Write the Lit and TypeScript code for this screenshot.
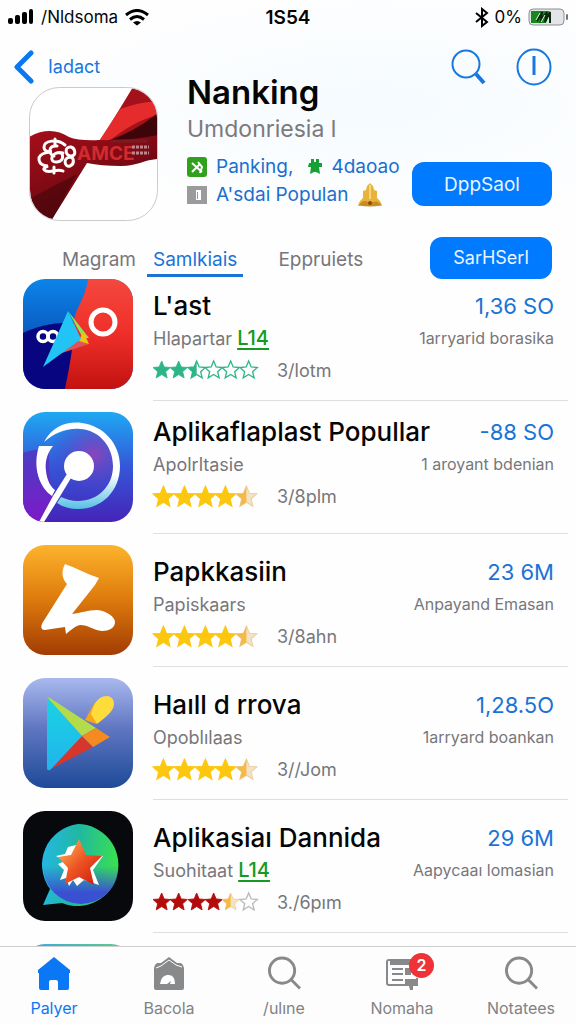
import { LitElement, html, svg, css } from "lit";
import { customElement, property } from "lit/decorators.js";
import { classMap } from "lit/directives/class-map.js";

type Star = "full" | "half" | "empty";

interface AppEntry {
  art: string;
  name: string;
  maker: string;
  tag?: string;
  tone: string;
  stars: Star[];
  votes: string;
  count: string;
  note: string;
  long?: boolean;
}

const GOLD: Star[] = ["full", "full", "full", "full", "half"];

const APPS: AppEntry[] = [
  { art: "duo", name: "L'ast", maker: "Hlapartar", tag: "L14", tone: "teal", stars: ["full", "full", "half", "empty", "empty", "empty"], votes: "3/lotm", count: "1,36 SO", note: "1arryarid borasika" },
  { art: "orbit", name: "Aplikaflaplast Popullar", maker: "Apolrltasie", tone: "gold", stars: GOLD, votes: "3/8plm", count: "-88 SO", note: "1 aroyant bdenian", long: true },
  { art: "zed", name: "Papkkasiin", maker: "Papiskaars", tone: "gold", stars: GOLD, votes: "3/8ahn", count: "23 6M", note: "Anpayand Emasan" },
  { art: "play", name: "Haıll d rrova", maker: "Opoblılaas", tone: "gold", stars: GOLD, votes: "3//Jom", count: "1,28.5O", note: "1arryard boankan" },
  { art: "bubble", name: "Aplikasiaı Dannida", maker: "Suohitaat", tag: "L14", tone: "red", stars: ["full", "full", "full", "full", "half", "empty"], votes: "3./6pım", count: "29 6M", note: "Aapycaaı lomasian" },
];

const art: Record<string, unknown> = {
  duo: svg`
    <defs>
      <linearGradient id="b" x2="0" y2="1"><stop stop-color="#0c84ea"/><stop offset=".45" stop-color="#0a5fc4"/></linearGradient>
      <linearGradient id="r" x2="0" y2="1"><stop stop-color="#f4483e"/><stop offset=".5" stop-color="#ee2f29"/><stop offset="1" stop-color="#c2120f"/></linearGradient>
    </defs>
    <path fill="url(#b)" d="M0 0h110v110H0z"/>
    <path fill="#07057f" d="M0 54C14 48 28 43 54 44l2 66H0z"/>
    <path fill="url(#r)" d="M65 0C62 22 50 32 51 45c0 20-5 45-9 65h68V0z"/>
    <g fill="none" stroke="#fff">
      <circle cx="20" cy="57.500" r="5" stroke-width="3.500"/>
      <circle cx="30" cy="57.500" r="5" stroke-width="3.500"/>
      <circle cx="80" cy="43" r="12" stroke-width="5"/>
    </g>
    <path fill="#d9575a" d="m66 65-30 10 20-15z"/>
    <path fill="#86e85a" d="m45 32 15 27h6z"/>
    <path fill="#f5c10c" d="m60 52 6 13-10-3z"/>
    <path fill="#21c4f5" d="M45 32 20 88l38-28z"/>`,
  orbit: svg`
    <defs>
      <linearGradient id="o" x2="0" y2="1"><stop stop-color="#1ea9f3"/><stop offset=".5" stop-color="#3556d8"/><stop offset="1" stop-color="#4524b8"/></linearGradient>
      <linearGradient id="p" x2="0" y2="1"><stop stop-color="#4a3fc4"/><stop offset="1" stop-color="#7c19c8"/></linearGradient>
      <linearGradient id="q" x2="0" y2="1"><stop offset=".6" stop-color="#fff"/><stop offset="1" stop-color="#56bfe4"/></linearGradient>
      <radialGradient id="k" cx=".7" cy=".35" r=".6"><stop stop-color="#8d44bb"/><stop offset="1" stop-color="#3c3fcb" stop-opacity="0"/></radialGradient>
    </defs>
    <path fill="url(#o)" d="M0 0h110v110H0z"/>
    <path fill="url(#p)" d="M0 41q10-4 26-4 0 42 6 50L18 110H0z"/>
    <circle cx="56" cy="54" r="38" fill="url(#k)"/>
    <path fill="url(#q)" d="M21 30C30 13 46 9 59 11c22 3 38 21 38 43 0 25-18 43-42 43-8 0-15-2-21-6l4-6c5 2 10 4 17 4 20 0 35-15 35-35S76 18 57 17c-14-1-25 4-36 13z"/>
    <path fill="#fff" d="M16 34h14c-7 9-8 17-7 25 1 10 5 16 9 19l-3 6C17 76 9 56 16 34z"/>
    <circle cx="56" cy="54" r="15" fill="#fff"/>
    <path fill="#fff" d="M44 62 30 84 16 110h5L36 86l12-20z"/>`,
  zed: svg`
    <defs><linearGradient id="z" x2="0" y2="1"><stop stop-color="#fdb32c"/><stop offset=".5" stop-color="#dd7a0c"/><stop offset="1" stop-color="#a23c04"/></linearGradient></defs>
    <path fill="url(#z)" d="M0 0h110v110H0z"/>
    <path fill="#fff" d="M42 19c11 4 22 10 34 14l-4 7-23 29c9-1 16-4 25-4 10 1 18 7 18 12 0 6-6 9-13 9-9-1-13-6-22-6-5 1-9 5-14 9l-1-7c-7 1-14 2-20 3-5 0-4-5-2-8l24-38c-5-5-6-13-2-20z"/>`,
  play: svg`
    <defs>
      <linearGradient id="g" x2="0" y2="1"><stop stop-color="#a9b9ee"/><stop offset=".45" stop-color="#6177c2"/><stop offset="1" stop-color="#1d4a98"/></linearGradient>
      <linearGradient id="h" x2="0" y2="1"><stop stop-color="#19d3e2"/><stop offset="1" stop-color="#22b4ec"/></linearGradient>
    </defs>
    <path fill="url(#g)" d="M0 0h110v110H0z"/>
    <path fill="#f8a41c" d="m62 42 10-18 8 14-7 8z"/>
    <path fill="#fddc3c" d="M68 36c2-7 5-17 15-18 8 0 10 8 6 14-3 5-9 9-15 14z"/>
    <path fill="#d6362c" d="m59 58 11 11-44 23z"/>
    <path fill="url(#h)" d="M24 19v72q2 3 5-1l30-32z"/>
    <path fill="#b4dc4a" d="m24 19 3 1 46 30-14 8z"/>
    <path fill="#f58a21" d="m59 58 14-8 14 9-17 10z"/>`,
  bubble: svg`
    <defs>
      <linearGradient id="u" x2="1" y2=".1"><stop stop-color="#25b7e8"/><stop offset=".5" stop-color="#20b8a0"/><stop offset="1" stop-color="#38df52"/></linearGradient>
      <linearGradient id="v" x2="0" y2="1"><stop offset=".5" stop-color="#3a52d0" stop-opacity="0"/><stop offset=".85" stop-color="#3a50d2"/></linearGradient>
      <linearGradient id="w" x2="1" y2="1"><stop stop-color="#ffc45c"/><stop offset=".5" stop-color="#ee5424"/><stop offset="1" stop-color="#c8160e"/></linearGradient>
    </defs>
    <path fill="#08090c" d="M0 0h110v110H0z"/>
    <path fill="url(#u)" d="M55 13a41 41 0 1 1-16 79l-19 2 7-16A41 41 0 0 1 55 13z"/>
    <circle cx="58" cy="55" r="38" fill="url(#v)"/>
    <path fill="#fff" d="m45 36 8-2 8 13 19-2-10 14 6 15-15-5-7 6-4-6-4 6-3-8-6 2 4-10-6-6 7-3-9-5 9-2z"/>
    <path fill="url(#w)" d="m56 28 7 16 16 1-12 12 4 17-15-8-14 7 3-16-10-11 13-2z"/>`,
  next: svg`
    <defs><linearGradient id="s" x2="1" y2="0"><stop stop-color="#3aa5ea"/><stop offset="1" stop-color="#5fd07a"/></linearGradient></defs>
    <path fill="url(#s)" d="M0 0h110v110H0z"/>`,
};

const STAR = "M10 0l2.900 6.900 7.100.600-5.400 4.800 1.700 7.200L10 15.600 3.700 19.500l1.700-7.200L0 7.500l7.100-.600z";
const STAR_LEFT = "M10 0v15.600L3.700 19.500l1.700-7.200L0 7.500l7.100-.600z";

@customElement("star-rating")
class StarRating extends LitElement {
  @property({ attribute: false }) stars: Star[] = [];
  @property() tone = "gold";

  static styles = css`
    :host { display: flex; width: 104px; align-items: center; }
    .star { flex: 1 1 0; min-width: 0; overflow: visible; }
    .teal { fill: #2db588; stroke: #2db588; }
    .gold { fill: #fdc70f; stroke: #fdc70f; }
    .red { fill: #b30a0a; stroke: #b30a0a; }
    .pale { fill: #f3e2c4; stroke: #ead0a4; }
    .amber { fill: #f5b944; stroke: #f5b944; }
    .grey { stroke: #b9b9b9; }
    .outline { fill: none; stroke-width: 1.500; }
  `;

  render() {
    const teal = this.tone === "teal";
    const split = teal ? "teal" : "amber";
    return this.stars.map(
      (kind) => html`<svg class="star" viewBox="0 0 20 20" aria-hidden="true">
        ${kind === "full" ? svg`<path class=${this.tone} d=${STAR} />` : null}
        ${kind === "half"
          ? svg`<path class=${teal ? "teal outline" : "pale"} d=${STAR} /><path class=${split} d=${STAR_LEFT} stroke-width="0" />`
          : null}
        ${kind === "empty" ? svg`<path class="${teal ? "teal" : "grey"} outline" d=${STAR} />` : null}
      </svg>`
    );
  }
}

@customElement("app-row")
class AppRow extends LitElement {
  @property({ attribute: false }) app!: AppEntry;

  static styles = css`
    :host { display: flex; gap: 20px; padding-left: 23px; }
    .art { width: 110px; height: 110px; border-radius: 22px; flex: none; }
    .body {
      flex: 1; min-width: 0; height: 122px; margin-right: 8px; padding-right: 14px;
      border-bottom: 1px solid #dfdfe1;
      display: grid; grid-template-columns: 1fr auto; grid-template-rows: 32px 32px 32px;
      align-items: center; align-content: start; padding-top: 11px; box-sizing: border-box;
      white-space: nowrap;
    }
    .body.long { padding-top: 4px; }
    .name { margin: 0; font-size: 26px; font-weight: 500; line-height: 32px; color: #050505; min-width: 0; }
    .maker, .votes, .note { color: #77777b; }
    .maker { font-size: 18px; }
    .tag { font-size: 20px; color: #149a20; font-weight: 500; text-decoration: underline; text-underline-offset: 3px; }
    .count { font-size: 22px; color: #1a73d6; text-align: right; }
    .note { font-size: 16px; text-align: right; }
    .score { display: flex; align-items: center; gap: 20px; grid-column: 1 / -1; }
    .votes { font-size: 18px; }
  `;

  render() {
    const a = this.app;
    return html`
      <svg class="art" viewBox="0 0 110 110" aria-hidden="true">${art[a.art]}</svg>
      <div class=${classMap({ body: true, long: !!a.long })}>
        <h2 class="name">${a.name}</h2>
        <span class="count">${a.count}</span>
        <span class="maker">${a.maker} ${a.tag ? html`<a class="tag" href="#tag">${a.tag}</a>` : null}</span>
        <span class="note">${a.note}</span>
        <div class="score">
          <star-rating .stars=${a.stars} .tone=${a.tone}></star-rating>
          <span class="votes">${a.votes}</span>
        </div>
      </div>`;
  }
}

const lens = svg`<circle cx="14.500" cy="14.500" r="13" /><path d="m24 24 9 9" />`;

@customElement("app-root")
class AppRoot extends LitElement {
  static styles = css`
    :host {
      display: flex; flex-direction: column; height: 100vh; overflow: hidden;
      font-family: Inter, "Liberation Sans", sans-serif; background: #fefefe; color: #050505;
    }
    button { font: inherit; border: 0; background: none; padding: 0; cursor: pointer; }
    a { text-decoration: none; }
    svg { display: block; }

    .top { flex: none; background: radial-gradient(ellipse at 65% 45%, #f5fbff, #fefefe 65%); }
    .status {
      height: 34px; padding: 0 8px; display: grid; grid-template-columns: 1fr auto 1fr;
      align-items: center;
    }
    .side { display: flex; align-items: center; gap: 7px; font-size: 17px; }
    .right { justify-content: flex-end; gap: 6px; }
    .clock { font-size: 19px; font-weight: 600; }

    .hero {
      display: grid; grid-template-columns: 144px 1fr auto; column-gap: 29px;
      padding: 0 24px 0 14px; height: 202px;
    }
    .back { display: flex; align-items: center; gap: 14px; height: 53px; padding-top: 12px; box-sizing: border-box; color: #1877dc; font-size: 18px; }
    .cover { margin-left: 15px; width: 129px; height: 134px; }
    .info { padding-top: 37px; white-space: nowrap; min-width: 0; }
    .title { margin: 0; font-size: 33px; line-height: 42px; font-weight: 600; }
    .country { margin: 0; font-size: 23px; line-height: 32px; color: #7a7a7e; }
    .facts { margin: 0; padding: 8px 0 0; list-style: none; font-size: 19px; line-height: 28px; }
    .fact { display: flex; align-items: center; gap: 9px; height: 28px; }
    .fact a { color: #1a6fce; }
    .cross { margin-left: 6px; }
    .actions { display: flex; flex-direction: column; align-items: flex-end; width: 0; }
    .tools { display: flex; gap: 30px; padding: 14px 0 0; height: 114px; align-items: flex-start; }
    .pill {
      background: #007aff; color: #eaf5ff; border-radius: 12px; height: 44px; width: 140px;
      font-size: 19px; flex: none; white-space: nowrap;
    }
    .pill.small { width: 122px; height: 42px; font-size: 18px; }
    .brand { font-size: 19px; font-weight: 700; fill: #d22a2f; }

    .tabs { flex: none; display: flex; align-items: center; height: 43px; padding: 0 24px 0 62px; font-size: 19px; }
    .links { flex: 1; display: flex; gap: 11px; padding-top: 8px; }
    .tab { color: #77777b; line-height: 26px; padding-bottom: 1px; border-bottom: 3px solid transparent; }
    .tab.on { color: #1a73d6; border-color: #1a73d6; padding-left: 6px; padding-right: 6px; }
    .tab.last { margin-left: 24px; }

    .list { flex: 1; min-height: 0; overflow: hidden; display: flex; flex-direction: column; gap: 11px; }
    .list app-row { flex: none; }
    .next { flex: none; margin-left: 23px; width: 110px; height: 110px; border-radius: 22px; }

    .bar {
      flex: none; height: 78px; box-sizing: border-box; border-top: 1px solid #cfcfd1; background: #fdfdfd;
      display: grid; grid-template-columns: 108fr 122fr 108fr 128fr 110fr; font-size: 16px;
    }
    .item { display: flex; flex-direction: column; align-items: center; gap: 6px; padding-top: 9px; color: #828286; line-height: 20px; }
    .item.on { color: #0a78f5; }
    .glyph { position: relative; height: 36px; }
    .badge {
      position: absolute; top: -3px; right: -15px; width: 25px; height: 25px; border-radius: 50%;
      background: #ee3236; color: #fff; font-size: 16px; font-weight: 600; line-height: 25px; text-align: center;
    }
  `;

  render() {
    return html`
      <div class="top">
      <header class="status">
        <div class="side">
          <svg width="26" height="16" viewBox="0 0 26 16" aria-label="Signal"><rect y="9" width="5" height="6" rx="2"/><rect x="7" y="6" width="5" height="9" rx="2"/><rect x="14" y="3" width="5" height="12" rx="2"/><rect x="21" width="4" height="15" rx="2"/></svg>
          <span>/Nldsoma</span>
          <svg width="24" height="17" viewBox="0 0 24 17" fill="none" stroke="#000" stroke-width="3" aria-label="Wi-Fi"><path d="M1 6q11-9 22 0M5 10.500q7-6 14 0"/><path d="m8 13.500 4 3 4-3q-4-3-8 0z" fill="#000" stroke="none"/></svg>
        </div>
        <span class="clock">1S54</span>
        <div class="side right">
          <svg width="14" height="21" viewBox="0 0 14 21" fill="none" stroke="#000" stroke-width="2" aria-label="Bluetooth"><path d="m1 6 11 9-5 4V2l5 4L1 15"/></svg>
          <span>0%</span>
          <svg width="40" height="18" viewBox="0 0 40 18" aria-label="Battery"><rect x="1" y="1" width="35" height="16" rx="4" fill="#e3e5e8" stroke="#8c8f92"/><path d="M3 3h18l-3 12H3z" fill="#148a1c"/><path d="m9 13 5-9-1 8 6-8-2 10 5-10v11" fill="none" stroke="#082a08" stroke-width="2"/><path d="m8 12 4-7M13 14l4-7" stroke="#e9f5e9"/><rect x="38" y="6" width="2" height="6" rx="1" fill="#777"/></svg>
        </div>
      </header>

      <section class="hero">
        <div>
          <a class="back" href="#back">
            <svg width="20" height="34" viewBox="0 0 20 34" fill="none" stroke="#0a78f0" stroke-width="5" stroke-linecap="round" stroke-linejoin="round" aria-hidden="true"><path d="M17 3 3 17l14 14"/></svg>
            Iadact
          </a>
          <svg class="cover" viewBox="0 0 129 134" aria-label="Nanking">
            <defs>
              <clipPath id="c"><rect x="1" y="1" width="127" height="132" rx="30"/></clipPath>
              <linearGradient id="m" x2=".6" y2="1"><stop stop-color="#a50f1a"/><stop offset=".6" stop-color="#7a0913"/><stop offset="1" stop-color="#3c0308"/></linearGradient>
            </defs>
            <g clip-path="url(#c)">
              <path fill="#fff" d="M0 0h129v134H0z"/>
              <path fill="#a3121a" d="M104 0h25v56H70z"/>
              <path fill="#e52b2c" d="M91 22q20-7 38-8v14Q104 34 78 56l-8-2z"/>
              <path fill="#3d0509" d="M129 26v30l-51-2q26-8 51-28z"/>
              <path fill="url(#m)" d="M0 50C14 42 28 42 40 50q10 4 30 3 30 1 59-5v24c-15 1-20 7-37 7q-20 0-34-3L22 134H0z"/>
              <path fill="#4c050c" d="m0 112 48-25-26 47H0z" opacity=".7"/>
            </g>
            <g fill="none" stroke="#fff" stroke-width="3" stroke-linecap="round">
              <path d="M36 58c-8-7-21-4-21 2s8 5 8 5-13 0-13 7 9 7 9 7-8 3-2 5 11-3 17 0M26 52v6M25 80v6M28 59c-10-1-8 9-3 10M34 66c-12-3-15 10-6 9s5-11 3-9"/>
              <path d="M42 60c-7-1-6 9 0 9s4-8 0-9zM41 70c-8 1-5 11 0 9s4-9 0-9z"/>
            </g>
            <text class="brand" x="48" y="73">AMCE</text>
            <g fill="none" stroke-width="3">
              <path d="M82 54h36" stroke="#7d1a20"/>
              <path d="M103 60h17M103 66h17" stroke="#b9888f" stroke-dasharray="3 1"/>
            </g>
            <rect x=".5" y=".5" width="128" height="133" rx="30" fill="none" stroke="#cbcbcd"/>
          </svg>
        </div>

        <div class="info">
          <h1 class="title">Nanking</h1>
          <p class="country">Umdonriesia l</p>
          <ul class="facts">
            <li class="fact">
              <svg width="20" height="20" viewBox="0 0 20 20" aria-hidden="true"><rect width="20" height="20" rx="3" fill="#31a01c"/><path d="m5 6 10 9M5 15l8-8M11 5l4 5-2 6" fill="none" stroke="#fff" stroke-width="2"/></svg>
              <a href="#panking">Panking,</a>
              <svg class="cross" width="14" height="16" viewBox="0 0 14 16" aria-hidden="true"><path fill="#17a034" d="M1 4h2V0h3v3h2V0h3v4h3v4h-3l1 7-4-2H6l-4 2 1-7H0z"/></svg>
              <a href="#adanao">4daoao</a>
            </li>
            <li class="fact">
              <svg width="20" height="18" viewBox="0 0 20 18" aria-hidden="true"><path fill="#9b9b9d" d="M0 0h20v18H0z"/><path fill="#fff" d="M9 4h5v10H9z"/><path fill="#9b9b9d" d="M10 6h1v7h-1z"/></svg>
              <a href="#popular">A'sdai Populan</a>
              <svg width="26" height="26" viewBox="0 0 26 26" aria-hidden="true"><path fill="#e8b23d" d="m10 4 3-3 3 3 1 4 3 1v7q4 3 5 8H1q1-5 5-8V9l3-1z"/><path fill="#c98a1f" d="M2 23q4-6 9-3l2 1 3-1q5-2 8 3-11 3-22 0z"/><circle cx="13" cy="21" r="2" fill="#855006"/><path d="M13 3v14" stroke="#f8d67c" stroke-width="2"/></svg>
            </li>
          </ul>
        </div>

        <div class="actions">
          <div class="tools">
            <button aria-label="Search"><svg width="35" height="37" viewBox="0 0 35 37" fill="none" stroke="#1878dd" stroke-width="2"><circle cx="15" cy="16" r="13.500"/><path d="m25 26 8 9" stroke-width="4"/></svg></button>
            <button aria-label="Info"><svg width="36" height="38" viewBox="0 0 36 38" fill="none" stroke="#1878dd" stroke-width="2"><ellipse cx="18" cy="19" rx="16.500" ry="17.500"/><path d="M18 8v19" stroke-width="3"/></svg></button>
          </div>
          <button class="pill">DppSaol</button>
        </div>
      </section>
      </div>

      <nav class="tabs">
        <div class="links">
          <a class="tab" href="#magram">Magram</a>
          <a class="tab on" href="#samlkiais">Samlkiais</a>
          <a class="tab last" href="#eppruiets">Eppruiets</a>
        </div>
        <button class="pill small">SarHSerl</button>
      </nav>

      <main class="list">
        ${APPS.map((a) => html`<app-row .app=${a}></app-row>`)}
        <svg class="next" viewBox="0 0 110 110" aria-hidden="true">${art.next}</svg>
      </main>

      <nav class="bar">
        <a class="item on" href="#palyer"><span class="glyph"><svg width="34" height="36" viewBox="0 0 34 36" aria-hidden="true"><path fill="#0a78f5" d="M17 1 1 14v3h1v15q0 2 2 2h8V26q0-2 2-2h5q2 0 2 2v8h9q2 0 2-2V17h1v-3z"/></svg></span>Palyer</a>
        <a class="item" href="#bacola"><span class="glyph"><svg width="32" height="36" viewBox="0 0 32 36" aria-hidden="true"><path fill="#88898b" d="M16 1 8 7H4q-3 2-3 5v20q0 2 2 2h26q2 0 2-2V12q0-3-3-5h-4z"/><path d="m3 12 5-2 8-6 7 5 6 2" fill="none" stroke="#fff"/><path fill="#fff" d="M7 28q1-8 7-9 8-1 8 9h-5l1-3-4 3z"/></svg></span>Bacola</a>
        <a class="item" href="#julne"><span class="glyph"><svg width="34" height="36" viewBox="-1 0 35 36" fill="none" stroke="#88898b" stroke-width="3" aria-hidden="true">${lens}</svg></span>/ulıne</a>
        <a class="item" href="#nomaha"><span class="glyph"><svg width="34" height="36" viewBox="0 0 34 36" fill="none" stroke="#88898b" stroke-width="2" aria-hidden="true"><path d="M32 22v7H4q-2 0-2-2V6q0-2 2-2h22"/><path d="M5 7h22" stroke-width="4"/><path d="M7 13h11M7 18h11M7 24h11"/><path d="M20 12h6v7h-6zM20 23h13v7H20zM24 30h4v4h-3z" fill="#88898b" stroke="none"/></svg><span class="badge">2</span></span>Nomaha</a>
        <a class="item" href="#notatees"><span class="glyph"><svg width="34" height="36" viewBox="-1 0 35 36" fill="none" stroke="#88898b" stroke-width="3" aria-hidden="true">${lens}</svg></span>Notatees</a>
      </nav>`;
  }
}
